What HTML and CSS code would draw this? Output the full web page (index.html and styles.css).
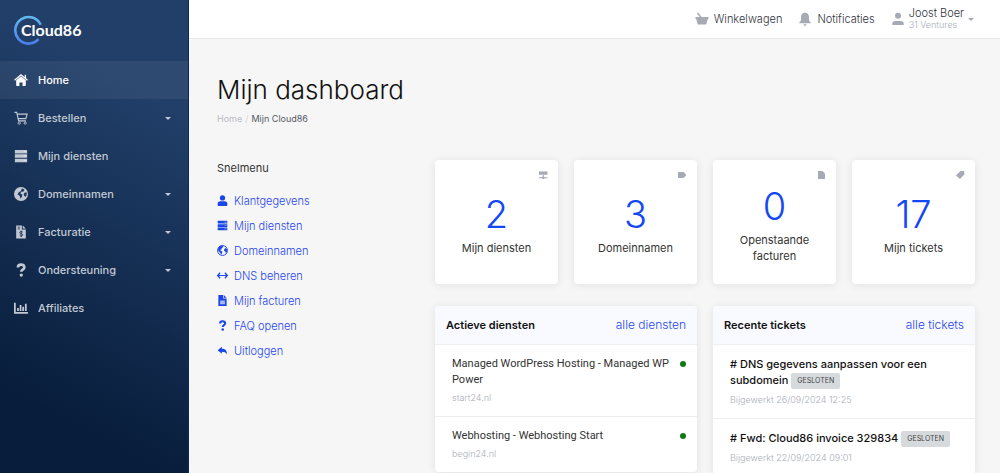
FILE: index.html
```html
<!DOCTYPE html>
<html lang="nl">
<head>
    <meta charset="UTF-8">
    <meta name="viewport" content="width=device-width, initial-scale=1.0">
    <title>Mijn dashboard - Cloud86</title>
    <link rel="stylesheet" href="styles.css">
</head>
<body>
    <!-- Shared icons -->
    <svg class="sprite" width="0" height="0" aria-hidden="true">
        <symbol id="server" viewBox="0 0 16 16">
            <path d="M1 1h14v4H1zM1 6h14v4H1zM1 11h14v4H1z"/>
            <path d="M11 2.500h3v1h-3zM11 7.500h3v1h-3zM11 12.500h3v1h-3z" fill="#fff" opacity=".6"/>
        </symbol>
        <symbol id="globe" viewBox="0 0 16 16">
            <circle cx="8" cy="8" r="8"/>
            <path d="M9 1.500l3 1.500-1 2-2.500.5-1.500 2 2.500 1L9 11l-1.500 2.500L6.500 10 4 8.500 5.500 6 8 4.500zM12 6.500l2.500-.5v3L13 11.500l-2-2.500z" fill="#1b3760"/>
        </symbol>
        <symbol id="globe-light" viewBox="0 0 16 16">
            <circle cx="8" cy="8" r="7.200" fill="none" stroke="currentColor" stroke-width="1.400"/>
            <path d="M2 3.500L5 1h3.500l.5 2-2 1.500-.5 2-2 .5 1 1.500 2 1v2L6 14 4.500 11 1.500 8zM10.500 6l2-1.500 2 1.500v3.500l-1.500 2.500-1-2.500-1.800-1z"/>
        </symbol>
        <symbol id="question" viewBox="0 0 16 16">
            <path d="M4.500 5.200C4.500 2.900 6 1.900 8 1.900s3.800 1 3.800 3.100c0 2.600-3.500 2.500-3.500 5" fill="none" stroke="currentColor" stroke-width="3"/>
            <circle cx="8.300" cy="13.800" r="1.900"/>
        </symbol>
        <symbol id="user" viewBox="0 0 16 16">
            <circle cx="8" cy="4.200" r="3.800"/>
            <path d="M1 15v-2.500C1 10.200 3 9 5 9h6c2 0 4 1.200 4 3.500V15c0 .6-.4 1-1 1H2c-.6 0-1-.4-1-1z"/>
        </symbol>
    </svg>

    <div class="app">
        <aside class="sidebar">
            <a class="logo" href="#">
                <svg width="72" height="32" viewBox="0 0 72 32">
                    <defs>
                        <linearGradient id="ring" x1="0" y1="0" x2="0" y2="1">
                            <stop offset="0" stop-color="#62b8ee"/>
                            <stop offset="1" stop-color="#4a80ec"/>
                        </linearGradient>
                    </defs>
                    <path d="M26.700 9.800A13.300 13.300 0 1 0 24.500 24.200" fill="none" stroke="url(#ring)" stroke-width="2.600"/>
                    <text class="logo-text" x="7" y="21">Cloud86</text>
                </svg>
            </a>
            <nav class="menu">
                <a class="menu-item active" href="#">
                    <svg class="menu-icon" viewBox="0 0 16 16"><path d="M8 3.600l5.500 4.700V14c0 .5-.3.8-.8.8H9.800v-4H6.200v4H3.300c-.5 0-.8-.3-.8-.8V8.300z"/><path d="M.6 8.300L8 2l7.400 6.300M13 2v4" fill="none" stroke="currentColor" stroke-width="1.500"/></svg>
                    Home
                </a>
                <a class="menu-item" href="#">
                    <svg class="menu-icon" viewBox="0 0 16 16"><path d="M.5 1.500h2.600l2.200 9.800h8.400M3.700 3.500H15l-1.400 5.200H4.800" fill="none" stroke="currentColor" stroke-width="1.300"/><circle cx="6" cy="13.800" r="1.300" fill="none" stroke="currentColor"/><circle cx="12.800" cy="13.800" r="1.300" fill="none" stroke="currentColor"/></svg>
                    Bestellen <span class="caret"></span>
                </a>
                <a class="menu-item" href="#">
                    <svg class="menu-icon"><use href="#server"/></svg>
                    Mijn diensten
                </a>
                <a class="menu-item" href="#">
                    <svg class="menu-icon"><use href="#globe"/></svg>
                    Domeinnamen <span class="caret"></span>
                </a>
                <a class="menu-item" href="#">
                    <svg class="menu-icon" viewBox="0 0 16 16"><path d="M2.500.5H9V5h4.500v10.500h-11zM10 .5L13.500 4H10z"/><path d="M4.300 2.500h2.500M4.300 4.500h2.500M10 8.300C9.600 7.300 6.500 7 6.500 8.700s3.400.8 3.400 2.500-3 1.500-3.500.4M8.200 6.300v7.400" fill="none" stroke="#173159"/></svg>
                    Facturatie <span class="caret"></span>
                </a>
                <a class="menu-item" href="#">
                    <svg class="menu-icon"><use href="#question"/></svg>
                    Ondersteuning <span class="caret"></span>
                </a>
                <a class="menu-item" href="#">
                    <svg class="menu-icon" viewBox="0 0 16 16"><path d="M0 2h2v10.500h14v2H0zM3.500 8h2v3.500h-2zM6.500 4.500h2v7h-2zM9.500 6.500h2v5h-2zM12.500 3h2v8.500h-2z"/></svg>
                    Affiliates
                </a>
            </nav>
        </aside>

        <div class="page">
            <header class="topbar">
                <a class="top-link" href="#">
                    <svg class="top-icon" viewBox="0 0 14 14"><path d="M.5 5h13v2h-.7l-1.600 5.500H2.800L1.200 7H.5z"/><path d="M2.500 1l4 5" stroke="currentColor" stroke-width="1.500"/></svg>
                    Winkelwagen
                </a>
                <a class="top-link" href="#">
                    <svg class="top-icon" viewBox="0 0 14 14"><path d="M7 .8c2.700 0 4 2 4 4.300v3.400l1.700 2v.8H1.300v-.8l1.700-2V5.100C3 2.800 4.300.8 7 .8zM5.500 12.300h3c0 2-3 2-3 0z"/></svg>
                    Notificaties
                </a>
                <button class="account" type="button">
                    <svg class="top-icon" viewBox="0 0 14 14"><circle cx="7" cy="3.800" r="3"/><path d="M1.300 13v-1.500C1.300 9.700 3 9 4.500 9h5c1.500 0 3.200.7 3.200 2.500V13z"/></svg>
                    <span class="account-name">Joost Boer<small>31 Ventures</small></span>
                    <span class="caret"></span>
                </button>
            </header>

            <main class="content">
                <h1>Mijn dashboard</h1>
                <div class="breadcrumb">
                    <a href="#">Home</a><span class="divider">/</span><span>Mijn Cloud86</span>
                </div>

                <div class="columns">
                    <nav class="quick-menu">
                        <h2>Snelmenu</h2>
                        <ul>
                            <li><a href="#"><svg class="quick-icon"><use href="#user"/></svg>Klantgegevens</a></li>
                            <li><a href="#"><svg class="quick-icon"><use href="#server"/></svg>Mijn diensten</a></li>
                            <li><a href="#"><svg class="quick-icon"><use href="#globe-light"/></svg>Domeinnamen</a></li>
                            <li><a href="#"><svg class="quick-icon" viewBox="0 0 16 16"><path d="M1.500 8h13M4.500 4L1 8l3.500 4M11.500 4L15 8l-3.500 4" fill="none" stroke="currentColor" stroke-width="1.800"/></svg>DNS beheren</a></li>
                            <li><a href="#"><svg class="quick-icon" viewBox="0 0 16 16"><path d="M2 0h7v5h5v11H2zM10 0l4 4h-4z"/><path d="M4.500 8h7v5.500h-7z" fill="#f6f6f6" opacity=".65"/></svg>Mijn facturen</a></li>
                            <li><a href="#"><svg class="quick-icon"><use href="#question"/></svg>FAQ openen</a></li>
                            <li><a href="#"><svg class="quick-icon" viewBox="0 0 16 16"><path d="M1 7.500L7 2.500v3c5 0 7.500 2.500 7.500 8-1.500-2.800-3.500-3.800-7.500-3.800v3z"/></svg>Uitloggen</a></li>
                        </ul>
                    </nav>

                    <div class="overview">
                        <a class="card" href="#">
                            <svg class="card-icon" viewBox="0 0 10 10"><path d="M1 1.500h8.500v3.300H1zM1 7.200h8.500v1H1zM4.800 5h1v2h-1z"/><circle cx="5.300" cy="7.700" r="1.300"/></svg>
                            <strong>2</strong>
                            <span>Mijn diensten</span>
                        </a>
                        <a class="card" href="#">
                            <svg class="card-icon" viewBox="0 0 10 10"><path d="M1 2.800c0-.5.3-.8.8-.8h4.700L9.500 5l-3 3H1.800c-.5 0-.8-.3-.8-.8z"/></svg>
                            <strong>3</strong>
                            <span>Domeinnamen</span>
                        </a>
                        <a class="card" href="#">
                            <svg class="card-icon" viewBox="0 0 10 10"><path d="M2 1h4.500L9 3.500V9H2z"/></svg>
                            <strong>0</strong>
                            <span>Openstaande facturen</span>
                        </a>
                        <a class="card" href="#">
                            <svg class="card-icon" viewBox="0 0 10 10"><path d="M5.500 1h3.200l.6.600v3L5 9 1 5.500z"/></svg>
                            <strong>17</strong>
                            <span>Mijn tickets</span>
                        </a>

                        <section class="panel">
                            <div class="panel-header">
                                <h3>Actieve diensten</h3>
                                <a href="#">alle diensten</a>
                            </div>
                            <div class="service">
                                <div>
                                    <p>Managed WordPress Hosting - Managed WP Power</p>
                                    <small>start24.nl</small>
                                </div>
                                <span class="status"></span>
                            </div>
                            <div class="service">
                                <div>
                                    <p>Webhosting - Webhosting Start</p>
                                    <small>begin24.nl</small>
                                </div>
                                <span class="status"></span>
                            </div>
                        </section>

                        <section class="panel">
                            <div class="panel-header">
                                <h3>Recente tickets</h3>
                                <a href="#">alle tickets</a>
                            </div>
                            <div class="ticket">
                                <p># DNS gegevens aanpassen voor een subdomein <span class="badge">GESLOTEN</span></p>
                                <small>Bijgewerkt 26/09/2024 12:25</small>
                            </div>
                            <div class="ticket">
                                <p># Fwd: Cloud86 invoice 329834 <span class="badge">GESLOTEN</span></p>
                                <small>Bijgewerkt 22/09/2024 09:01</small>
                            </div>
                        </section>
                    </div>
                </div>
            </main>
        </div>
    </div>
</body>
</html>
```

FILE: styles.css
```css
* {
    box-sizing: border-box;
}

body {
    margin: 0;
    font-family: Inter, "Liberation Sans", sans-serif;
    font-size: 11px;
    line-height: 16px;
    color: #333;
    background-color: #f6f6f6;
}

a {
    color: inherit;
    text-decoration: none;
}

h1, h2, h3, p, ul {
    margin: 0;
    padding: 0;
}

svg {
    fill: currentColor;
    flex-shrink: 0;
}

small {
    display: block;
    font-size: 9px;
    font-weight: 300;
    color: #a9adb6;
}

.sprite {
    position: absolute;
}

.app {
    display: flex;
    height: 100vh;
    overflow: hidden;
}

/* Sidebar */
.sidebar {
    width: 189px;
    flex-shrink: 0;
    border-right: 1px solid #0a2a5c;
    background: linear-gradient(208deg, #213f69 20%, #081d3b 85%);
}

.logo {
    display: flex;
    height: 61px;
    padding: 15px 14px;
}

.logo-text {
    font-family: Lato, sans-serif;
    font-size: 16px;
    font-weight: 700;
    fill: #fff;
}

.menu-item {
    display: flex;
    align-items: center;
    gap: 10px;
    height: 38px;
    padding: 0 17px 0 14px;
    font-weight: 500;
    color: #c3c9d3;
}

.menu-item.active {
    color: #fff;
    background-color: rgba(255, 255, 255, 0.06);
}

.menu-icon {
    width: 14px;
    height: 14px;
}

.caret {
    margin-left: auto;
    border: 3px solid transparent;
    border-top-color: currentColor;
    border-bottom: 0;
}

/* Top bar */
.page {
    flex: 1;
    min-width: 0;
}

.topbar {
    display: flex;
    justify-content: flex-end;
    align-items: center;
    gap: 16px;
    height: 39px;
    padding-right: 26px;
    border-bottom: 1px solid #e9e9e9;
    background-color: #fff;
    font-weight: 300;
    color: #30343c;
}

.top-link {
    display: flex;
    align-items: center;
    gap: 5px;
}

.top-icon {
    width: 14px;
    height: 14px;
    color: #a6aab5;
}

.account {
    display: flex;
    align-items: center;
    gap: 4px;
    padding: 0;
    border: 0;
    background: none;
    font: inherit;
    color: inherit;
    text-align: left;
}

.account-name {
    line-height: 12px;
}

.account .caret {
    color: #a6aab5;
}

/* Content */
.content {
    padding: 34px 25px 0 28px;
}

h1 {
    font-size: 26px;
    line-height: 34px;
    font-weight: 300;
    color: #111;
}

.breadcrumb {
    display: flex;
    gap: 3px;
    margin-top: 4px;
    font-size: 9px;
    color: #555962;
}

.breadcrumb a {
    color: #b9bcc4;
}

.divider {
    color: #d3d5da;
}

.columns {
    display: flex;
    gap: 28px;
    margin-top: 33px;
}

.quick-menu {
    flex: 0 0 190px;
}

.quick-menu h2 {
    font-size: 11px;
    font-weight: 400;
}

.quick-menu ul {
    margin-top: 12px;
    list-style: none;
}

.quick-menu a {
    display: flex;
    align-items: center;
    gap: 6px;
    height: 25px;
    font-weight: 300;
    color: #1f45f0;
}

.quick-icon {
    width: 11px;
    height: 11px;
    color: #1a45e8;
}

.overview {
    flex: 1;
    display: grid;
    grid-template-columns: repeat(4, 1fr);
    align-items: start;
    gap: 22px 16px;
}

.card, .panel {
    border-radius: 4px;
    background-color: #fff;
    box-shadow: 0 1px 8px rgba(0, 0, 0, 0.09);
}

.card {
    position: relative;
    display: flex;
    flex-direction: column;
    align-items: center;
    justify-content: center;
    gap: 4px;
    height: 124px;
    padding: 4px 20px 0;
    text-align: center;
}

.card strong {
    font-size: 38px;
    line-height: 44px;
    font-weight: 300;
    color: #1448f5;
}

.card-icon {
    position: absolute;
    top: 10px;
    right: 10px;
    width: 10px;
    height: 10px;
    color: #a6aab5;
}

.panel {
    grid-column: span 2;
    overflow: hidden;
}

.panel-header {
    display: flex;
    justify-content: space-between;
    align-items: center;
    height: 39px;
    padding: 0 11px;
    border-bottom: 1px solid #eef0f4;
    background-color: #f9faff;
}

.panel-header h3 {
    font-size: 11px;
    font-weight: 600;
    color: #111;
}

.panel-header a {
    font-size: 12px;
    font-weight: 300;
    color: #1f45f0;
}

.service {
    display: flex;
    justify-content: space-between;
    gap: 4px;
    padding: 11px 11px 10px 17px;
}

.service p {
    font-family: Roboto, sans-serif;
}

.service + .service, .ticket + .ticket {
    border-top: 1px solid #eee;
}

.service small {
    margin-top: 2px;
}

.status {
    width: 6px;
    height: 6px;
    margin-top: 5px;
    flex-shrink: 0;
    border-radius: 50%;
    background-color: #137a13;
}

.ticket {
    padding: 11px 17px 10px;
}

.ticket p {
    font-weight: 500;
    color: #111;
}

.ticket small {
    margin-top: 3px;
}

.badge {
    display: inline-block;
    padding: 0 6px;
    border-radius: 2px;
    background-color: #d6dadd;
    font-size: 7px;
    font-weight: 400;
    vertical-align: middle;
    color: #444;
}
```
